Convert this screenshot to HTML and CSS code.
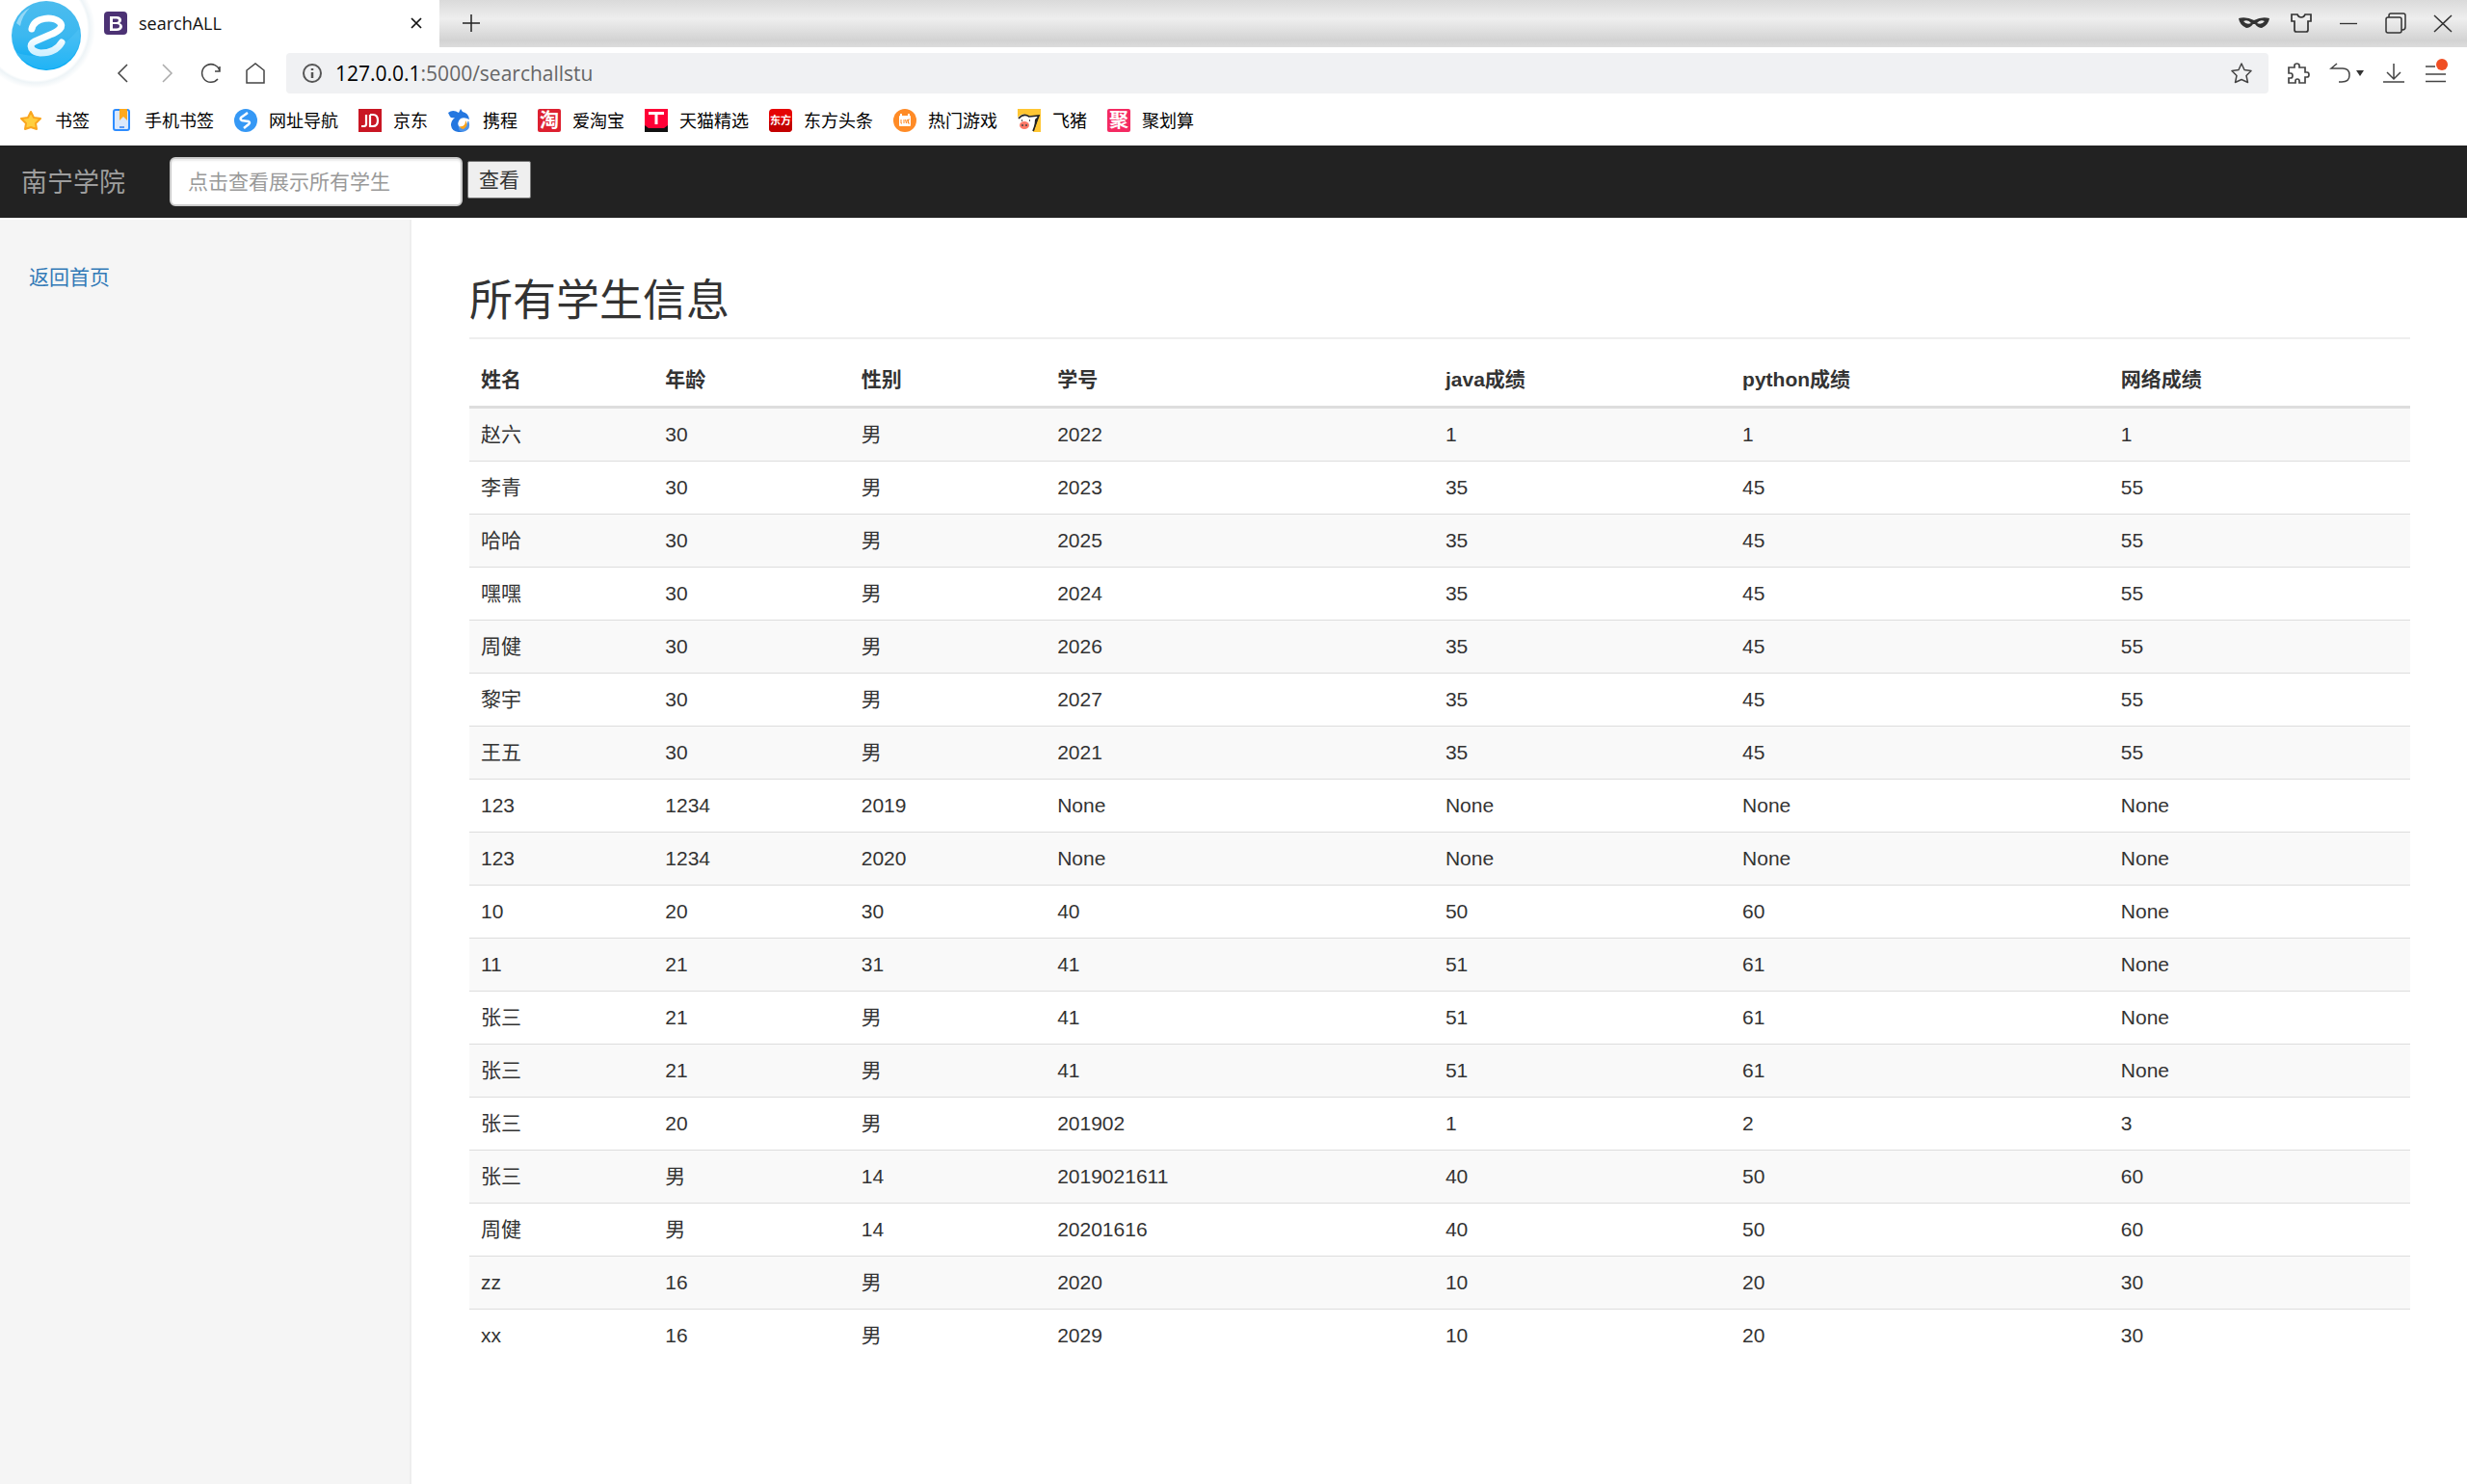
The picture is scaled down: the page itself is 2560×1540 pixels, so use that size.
FILE: index.html
```html
<!DOCTYPE html>
<html lang="zh-CN">
<head>
<meta charset="utf-8">
<title>searchALL</title>
<link rel="stylesheet" href="styles.css">
</head>
<body>
<header class="browser">
  <svg class="logo" width="100" height="100" viewBox="0 0 100 100" aria-hidden="true">
    <defs>
      <linearGradient id="ball" x1="0" y1="0" x2="0" y2="1"><stop offset="0" stop-color="#4cbcee"/><stop offset=".5" stop-color="#3cb8f0"/><stop offset="1" stop-color="#00a9f4"/></linearGradient>
      <radialGradient id="halo"><stop offset=".86" stop-color="#fff"/><stop offset=".9" stop-color="#eef4f7"/><stop offset="1" stop-color="#fff"/></radialGradient>
      <linearGradient id="ink" x1="0" y1="0" x2="0" y2="1"><stop offset=".5" stop-color="#fff"/><stop offset="1" stop-color="#d3f1ff"/></linearGradient>
    </defs>
    <circle cx="37" cy="30" r="62" fill="url(#halo)"/>
    <circle cx="48" cy="37" r="36" fill="url(#ball)"/>
    <path d="M16 54Q50 68 82 30Q86 50 70 64Q48 80 26 64Q19 60 16 54Z" fill="#5cc9f8" opacity=".35"/>
    <path d="M17 24Q21 13 31 8Q23 16 21 27Z" fill="#a5dff8" opacity=".8"/>
    <path d="M33 30C36 17 56 17 62 23C67 28 60 33 52 36L36 43C28 47 33 54 42 55C54 55 60 51 64 44" fill="none" stroke="url(#ink)" stroke-width="7" stroke-linecap="round"/>
  </svg>
  <div class="tabstrip">
    <div class="tab">
      <svg width="24" height="24" viewBox="0 0 24 24" aria-hidden="true"><rect width="24" height="24" rx="4" fill="#4c3274"/><path fill="#fff" fill-rule="evenodd" d="M6 5H13Q18 5 18 9Q18 11 16 12Q19 13 19 16Q18 20 13 20H6ZM9 7.500V11H13Q15 11 15 9Q15 7.500 13 7.500ZM9 13V17.500H13Q16 17.500 16 15Q16 13 13 13Z"/></svg>
      <span class="tab-title">searchALL</span>
      <button class="icon tab-close" aria-label="关闭标签"><svg width="14" height="14" viewBox="0 0 14 14"><path d="M2 2L12 12M12 2L2 12" stroke="#111" stroke-width="1.700"/></svg></button>
    </div>
    <button class="icon new-tab" aria-label="新标签"><svg width="20" height="20" viewBox="0 0 20 20"><path d="M10 1V19M1 10H19" stroke="#222" stroke-width="1.500"/></svg></button>
    <div class="window-tools">
      <button class="icon" aria-label="无痕"><svg width="32" height="22" viewBox="0 0 32 22"><path fill="#333" fill-rule="evenodd" d="M0 6Q8 4 16 8Q24 4 32 6Q31 13 24 16Q20 16 17 12H15Q12 16 8 16Q1 13 0 6ZM5 9Q8 13 13 11Q10 7 5 9ZM27 9Q22 7 19 11Q24 13 27 9Z"/></svg></button>
      <button class="icon" aria-label="皮肤"><svg width="32" height="22" viewBox="-4 0 32 22"><path d="M2 2H8Q9 5 12 5Q15 5 16 2H22V9H19V18Q19 20 17 20H7Q5 20 5 18V9H2Z" fill="none" stroke="#333" stroke-width="1.700"/></svg></button>
      <button class="icon" aria-label="最小化"><svg width="32" height="22" viewBox="-6 0 32 22"><path d="M1 11.500H19" stroke="#333" stroke-width="1.300"/></svg></button>
      <button class="icon" aria-label="还原"><svg width="32" height="22" viewBox="-5 0 32 22"><path d="M4 5V3Q4 1 6 1H19Q21 1 21 3V15Q21 18 18 18H17" fill="none" stroke="#333" stroke-width="1.500"/><rect x="1" y="5" width="16" height="16" rx="2" fill="none" stroke="#333" stroke-width="1.500"/></svg></button>
      <button class="icon" aria-label="关闭"><svg width="32" height="22" viewBox="-6 0 32 22"><path d="M1 3L19 20M19 3L1 20" stroke="#333" stroke-width="1.500"/></svg></button>
    </div>
  </div>
  <div class="toolbar">
    <div class="nav-buttons">
      <button class="icon" aria-label="后退"><svg width="22" height="22" viewBox="0 0 22 22"><path d="M15 2L6 11L15 20" fill="none" stroke="#444" stroke-width="1.500"/></svg></button>
      <button class="icon" aria-label="前进"><svg width="22" height="22" viewBox="0 0 22 22"><path d="M6 2L15 11L6 20" fill="none" stroke="#aaa" stroke-width="1.500"/></svg></button>
      <button class="icon" aria-label="刷新"><svg width="22" height="22" viewBox="0 0 22 22"><path d="M18 17A9.300 9.300 0 1 1 20 9M15 9H20V4" fill="none" stroke="#444" stroke-width="1.500"/></svg></button>
      <button class="icon" aria-label="主页"><svg width="22" height="22" viewBox="0 0 22 22"><path d="M2 8L11 1L20 8V21H2Z" fill="none" stroke="#444" stroke-width="1.500"/></svg></button>
    </div>
    <div class="address">
      <svg width="22" height="22" viewBox="0 0 22 22" aria-hidden="true"><circle cx="11" cy="11" r="9" fill="none" stroke="#555" stroke-width="2"/><path d="M11 10V16M11 6V8" stroke="#555" stroke-width="2.500"/></svg>
      <span class="url"><span class="host">127.0.0.1</span>:5000/searchallstu</span>
      <button class="icon" aria-label="收藏"><svg width="22" height="22" viewBox="0 0 22 22"><path d="M11 1L14 7.500L21 8.500L16 13.500L17.500 20.500L11 17.500L4.500 20.500L6 13.500L1 8.500L8 7.500Z" fill="none" stroke="#444" stroke-width="1.500" stroke-linejoin="round"/></svg></button>
    </div>
    <div class="toolbar-actions">
      <button class="icon" aria-label="扩展"><svg width="24" height="24" viewBox="0 0 24 24"><path d="M2 6H8V4Q8 2 10.500 2Q13 2 13 4V6H19V11H21Q23 11 23 13.500Q23 16 21 16H19V22H13V20Q13 18 11 18Q9 18 9 20V22H2V17H4Q6 17 6 14.500Q6 12 4 12H2Z" fill="none" stroke="#444" stroke-width="1.700"/></svg></button>
      <button class="icon" aria-label="恢复"><svg width="36" height="22" viewBox="0 0 36 22"><path d="M8 1L2 6H14Q21 6 21 13Q21 20 13 20H10" fill="none" stroke="#444" stroke-width="1.500"/><path d="M28 8H36L32 14Z" fill="#333"/></svg></button>
      <button class="icon" aria-label="下载"><svg width="24" height="22" viewBox="0 0 24 22"><path d="M11 1V17M4 10L11 17L18 10M0 20H22" fill="none" stroke="#444" stroke-width="1.500"/></svg></button>
      <button class="icon" aria-label="菜单"><svg width="24" height="34" viewBox="0 0 24 34"><path d="M0 10H10M0 18H21M0 25.500H21" stroke="#444" stroke-width="1.700"/><circle cx="17" cy="8" r="6" fill="#f04e23"/></svg></button>
    </div>
  </div>
  <nav class="bookmarks">
    <a href="#"><svg width="24" height="24" viewBox="0 0 24 24"><path d="M11 3L14 9L21 10L16 15L17 21L11 19L5 21L6 15L1 10L8 9Z" fill="#ffcf3f" stroke="#faa61f" stroke-width="2" stroke-linejoin="round"/></svg>书签</a>
    <a href="#"><svg width="24" height="24" viewBox="0 0 24 24"><rect x="4" y="1" width="16" height="21" rx="2" fill="#dbe8fb" stroke="#2c8cff" stroke-width="2"/><path d="M10 0H18V12L14 8L10 12Z" fill="#ffa91c"/><path d="M10 19H15" stroke="#2c7cf0" stroke-width="1.500"/></svg>手机书签</a>
    <a href="#"><svg width="24" height="24" viewBox="0 0 24 24"><circle cx="12" cy="12" r="12" fill="#3598f5"/><path d="M14 4L7 9Q6 11 8 12L15 13Q17 14 15 16L10 20" fill="none" stroke="#fff" stroke-width="2.500"/></svg>网址导航</a>
    <a href="#"><svg width="24" height="24" viewBox="0 0 24 24"><rect width="24" height="24" fill="#c91623"/><path d="M8 6V16Q8 18 5 18H3M12 6V18H15Q20 18 20 12Q20 6 15 6H12" fill="none" stroke="#fff" stroke-width="2.200"/></svg>京东</a>
    <a href="#"><svg width="24" height="24" viewBox="0 0 24 24"><path d="M0 4Q5 0 11 4L13 0L15 3Q21 4 22 11Q17 8 13 10Q8 14 12 20L15 24Q4 25 3 17Q3 12 7 9Q3 10 2 8Z" fill="#2477e0"/><path d="M21 12Q25 22 15 24Q10 23 11 18Q15 22 18 18Z" fill="#4b92e9"/><path d="M18 12Q22 17 16 21Q13 21 12 18Q18 19 18 12Z" fill="#f8a21c"/></svg>携程</a>
    <a href="#"><svg width="24" height="24" viewBox="0 0 24 24"><rect width="24" height="24" rx="2" fill="#dd2030"/><text class="glyph" x="2" y="19" font-size="20" fill="#fff">淘</text></svg>爱淘宝</a>
    <a href="#"><svg width="24" height="24" viewBox="0 0 24 24"><rect width="24" height="24" fill="#ff0036"/><path d="M0 24V17L4 20H20L24 17V24Z" fill="#111"/><path d="M4 4.500H20M12 4V16" stroke="#fff" stroke-width="3"/></svg>天猫精选</a>
    <a href="#"><svg width="24" height="24" viewBox="0 0 24 24"><rect width="24" height="24" rx="4" fill="#e50505"/><path d="M0 13H24V20Q24 24 20 24H4Q0 24 0 20Z" fill="#c30000"/><text class="glyph" x="1" y="16" font-size="11" fill="#fff">东方</text></svg>东方头条</a>
    <a href="#"><svg width="24" height="24" viewBox="0 0 24 24"><circle cx="12" cy="12" r="12" fill="#ff8b26"/><path d="M8 5V8M16 5V8" stroke="#fff" stroke-width="2"/><rect x="6" y="7" width="12" height="11" rx="1" fill="#fff"/><path d="M8 11V15H9M11 11V15M12.500 11L13.500 15L14.500 11M17 11H15.500V15H17" fill="none" stroke="#ff8b26"/></svg>热门游戏</a>
    <a href="#"><svg width="24" height="24" viewBox="0 0 24 24"><path d="M0 0H24V24H16L22 7L11 7Q5 3 0 9Z" fill="#ffc633"/><path d="M1 10Q6 4 12 8L22 7Q20 12 16 23" fill="none" stroke="#222" stroke-width="1.600"/><path d="M18 11L22 7L17 23Z" fill="#222"/><path d="M4 12H5M12 12H13" stroke="#222" stroke-width="1.600"/><ellipse cx="7" cy="17" rx="5" ry="4" fill="#ff7868"/><path d="M5 16V18M9 16V18" stroke="#444" stroke-width="1.500"/></svg>飞猪</a>
    <a href="#"><svg width="24" height="24" viewBox="0 0 24 24"><rect width="24" height="24" rx="2" fill="#f42a62"/><text class="glyph" x="2" y="19" font-size="20" fill="#fff">聚</text></svg>聚划算</a>
  </nav>
</header>
<nav class="navbar">
  <a class="brand" href="#">南宁学院</a>
  <form class="search">
    <input type="text" placeholder="点击查看展示所有学生" aria-label="点击查看展示所有学生">
    <button type="button">查看</button>
  </form>
</nav>
<div class="page">
  <aside class="sidebar"><a href="#">返回首页</a></aside>
  <main class="main">
    <h1>所有学生信息</h1>
    <table class="students">
      <colgroup><col class="c-name"><col class="c-age"><col class="c-sex"><col class="c-id"><col class="c-java"><col class="c-python"><col></colgroup>
      <thead><tr><th>姓名</th><th>年龄</th><th>性别</th><th>学号</th><th>java成绩</th><th>python成绩</th><th>网络成绩</th></tr></thead>
      <tbody>
        <tr><td>赵六</td><td>30</td><td>男</td><td>2022</td><td>1</td><td>1</td><td>1</td></tr>
        <tr><td>李青</td><td>30</td><td>男</td><td>2023</td><td>35</td><td>45</td><td>55</td></tr>
        <tr><td>哈哈</td><td>30</td><td>男</td><td>2025</td><td>35</td><td>45</td><td>55</td></tr>
        <tr><td>嘿嘿</td><td>30</td><td>男</td><td>2024</td><td>35</td><td>45</td><td>55</td></tr>
        <tr><td>周健</td><td>30</td><td>男</td><td>2026</td><td>35</td><td>45</td><td>55</td></tr>
        <tr><td>黎宇</td><td>30</td><td>男</td><td>2027</td><td>35</td><td>45</td><td>55</td></tr>
        <tr><td>王五</td><td>30</td><td>男</td><td>2021</td><td>35</td><td>45</td><td>55</td></tr>
        <tr><td>123</td><td>1234</td><td>2019</td><td>None</td><td>None</td><td>None</td><td>None</td></tr>
        <tr><td>123</td><td>1234</td><td>2020</td><td>None</td><td>None</td><td>None</td><td>None</td></tr>
        <tr><td>10</td><td>20</td><td>30</td><td>40</td><td>50</td><td>60</td><td>None</td></tr>
        <tr><td>11</td><td>21</td><td>31</td><td>41</td><td>51</td><td>61</td><td>None</td></tr>
        <tr><td>张三</td><td>21</td><td>男</td><td>41</td><td>51</td><td>61</td><td>None</td></tr>
        <tr><td>张三</td><td>21</td><td>男</td><td>41</td><td>51</td><td>61</td><td>None</td></tr>
        <tr><td>张三</td><td>20</td><td>男</td><td>201902</td><td>1</td><td>2</td><td>3</td></tr>
        <tr><td>张三</td><td>男</td><td>14</td><td>2019021611</td><td>40</td><td>50</td><td>60</td></tr>
        <tr><td>周健</td><td>男</td><td>14</td><td>20201616</td><td>40</td><td>50</td><td>60</td></tr>
        <tr><td>zz</td><td>16</td><td>男</td><td>2020</td><td>10</td><td>20</td><td>30</td></tr>
        <tr><td>xx</td><td>16</td><td>男</td><td>2029</td><td>10</td><td>20</td><td>30</td></tr>
      </tbody>
    </table>
  </main>
</div>
</body>
</html>
```
FILE: styles.css
```css
* { box-sizing: border-box; }

body {
  margin: 0;
  min-height: 100vh;
  display: flex;
  flex-direction: column;
  background: #fff;
  color: #333;
  font: 21px/30px "Liberation Sans", "Noto Sans CJK SC", sans-serif;
}

svg { display: block; flex: none; }
a { text-decoration: none; }

.icon {
  padding: 0;
  border: 0;
  background: none;
  flex: none;
}

/* Browser frame */
.browser {
  position: relative;
  background: #fff;
  font-family: "Open Sans", "Noto Sans CJK SC", sans-serif;
}

.logo {
  position: absolute;
  top: 0;
  left: 0;
}

.tabstrip {
  display: flex;
  align-items: center;
  height: 49px;
  padding-bottom: 2px;
  background: linear-gradient(90deg, #fff 456px, transparent 456px), linear-gradient(#dadada, #eee 40%, #d3d3d3 85%, #dcdcdc);
}

.tab {
  display: flex;
  align-items: center;
  width: 456px;
  padding: 0 17px 0 108px;
}

.tab-title {
  margin-left: 12px;
  color: #111;
  font-size: 18px;
}

.tab-close { margin-left: auto; }
.new-tab { margin-left: 23px; }

.window-tools {
  display: flex;
  align-items: center;
  gap: 17px;
  margin-left: auto;
  padding-right: 9px;
}

.toolbar {
  display: flex;
  align-items: center;
  height: 54px;
  padding-right: 19px;
}

.nav-buttons {
  display: flex;
  justify-content: space-between;
  width: 297px;
  padding: 0 21px 0 117px;
}

.address {
  display: flex;
  flex: 1;
  align-items: center;
  height: 42px;
  padding: 0 17px 0 16px;
  border-radius: 4px;
  background: #f0f1f3;
}

.url {
  margin: 0 auto 0 13px;
  color: #666;
  line-height: 42px;
  white-space: nowrap;
}

.host { color: #000; }

.toolbar-actions {
  display: flex;
  align-items: center;
  gap: 20px;
  padding-left: 19px;
}

.bookmarks {
  display: flex;
  gap: 21px;
  padding: 6px 21px 10px;
  line-height: 32px;
}

.bookmarks a {
  display: flex;
  align-items: center;
  gap: 12px;
  color: #000;
  font-size: 18px;
  white-space: nowrap;
}

.glyph { font-family: "Noto Sans CJK SC", sans-serif; font-weight: 700; }

/* Site header */
.navbar {
  display: flex;
  gap: 46px;
  height: 75px;
  padding: 12px 22px;
  background: #222;
}

.brand {
  color: #9d9d9d;
  font-size: 27px;
  line-height: 54px;
}

.search {
  display: flex;
  align-items: flex-start;
  gap: 5px;
}

.search input {
  width: 304px;
  height: 51px;
  padding: 0 17px;
  border: 2px solid #ccc;
  border-radius: 6px;
  box-shadow: inset 0 2px 2px rgba(0, 0, 0, .08);
  color: #555;
  font: inherit;
}

.search input::placeholder { color: #999; opacity: 1; }

.search button {
  height: 39px;
  margin-top: 4px;
  padding: 0 11px;
  border: 1px solid #767676;
  border-radius: 2px;
  background: #efefef;
  color: #333;
  font: inherit;
}

/* Page body */
.page {
  display: flex;
  flex: 1;
  padding-top: 2px;
}

.sidebar {
  width: 427px;
  padding: 45px 30px;
  border-right: 2px solid #eee;
  background: #f5f5f5;
}

.sidebar a { color: #337ab7; }

.main {
  flex: 1;
  padding: 60px 59px 0 60px;
}

h1 {
  margin: 0 0 15px;
  padding-bottom: 12px;
  border-bottom: 2px solid #eee;
  font-size: 45px;
  font-weight: 400;
  line-height: 50px;
}

.students {
  width: 100%;
  border-spacing: 0;
  table-layout: fixed;
}

.c-name { width: 9.5%; }
.c-age, .c-sex { width: 10.1%; }
.c-id { width: 20%; }
.c-java { width: 15.3%; }
.c-python { width: 19.5%; }

.students th,
.students td {
  padding: 12px;
  text-align: left;
}

.students th { border-bottom: 3px solid #ddd; }
.students td { border-top: 1px solid #ddd; }
.students tbody tr:first-child td { border-top: 0; }
.students tbody tr:nth-child(odd) { background: #f9f9f9; }
```
